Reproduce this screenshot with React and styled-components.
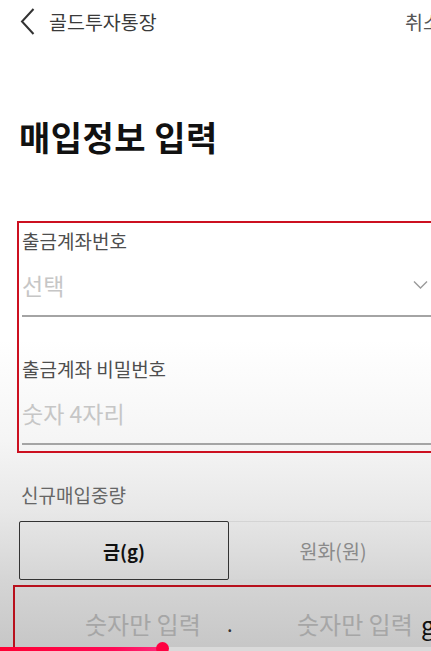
import React from 'react'
import styled, { createGlobalStyle } from 'styled-components'

const Global = createGlobalStyle`
  html, body {
    margin: 0;
    padding: 0;
    overflow: hidden;
  }
  body {
    width: 431px;
    height: 651px;
    font-family: "Noto Sans CJK KR", "Noto Sans", sans-serif;
    background: linear-gradient(180deg, #ffffff 0px, #ffffff 340px, #f5f5f5 440px, #e8e8e8 510px, #d5d5d5 580px, #c6c6c6 651px);
  }
`

export default function App() {
  return (
    <>
      <Global />
      <Page>
        <Header>
          <BackButton>
            <svg width="15" height="27" viewBox="0 0 15 27">
              <path d="M13.5 1 L2 13.5 L13.5 26" fill="none" stroke="#333" strokeWidth="2" />
            </svg>
            <span>골드투자통장</span>
          </BackButton>
          <Cancel>취소</Cancel>
        </Header>

        <Title>매입정보 입력</Title>

        <Highlight>
          <Field>
            <Label>출금계좌번호</Label>
            <ValueRow>
              <Placeholder>선택</Placeholder>
              <svg width="15" height="10" viewBox="0 0 15 10">
                <path d="M1 1.5 L7.5 8 L14 1.5" fill="none" stroke="#9a9a9a" strokeWidth="1.4" />
              </svg>
            </ValueRow>
          </Field>
          <Field $gapTop>
            <Label>출금계좌 비밀번호</Label>
            <ValueRow>
              <Placeholder>숫자 4자리</Placeholder>
            </ValueRow>
          </Field>
        </Highlight>

        <SectionLabel>신규매입중량</SectionLabel>
        <Toggle>
          <ToggleItem $active>금(g)</ToggleItem>
          <ToggleItem>원화(원)</ToggleItem>
        </Toggle>

        <AmountBox>
          <AmountInput>숫자만 입력</AmountInput>
          <Dot>.</Dot>
          <AmountInput>숫자만 입력</AmountInput>
          <Unit>g</Unit>
        </AmountBox>
      </Page>
      <Progress>
        <Played />
        <Knob />
      </Progress>
    </>
  )
}

//styling

const Page = styled.div`
  width: 456px;
  box-sizing: border-box;
  padding: 0 0 0 19px;
  color: #222;
`

const Header = styled.div`
  height: 42px;
  display: flex;
  align-items: center;
  justify-content: space-between;
  margin-left: 1px;
`

const BackButton = styled.div`
  display: flex;
  align-items: center;
  gap: 14px;
  font-size: 19.5px;
  color: #3a3a3a;
`

const Cancel = styled.div`
  font-size: 19.5px;
  color: #555;
  width: 51px;
`

const Title = styled.h1`
  margin: 73px 0 0 0;
  font-size: 34px;
  font-weight: 700;
  line-height: 44px;
  color: #111;
  letter-spacing: 0.5px;
`

const Highlight = styled.div`
  margin: 62px 0 0 -2px;
  border: 2px solid #cc1020;
  border-right: none;
  padding: 5px 0 6px 3px;
`

const Field = styled.div`
  display: flex;
  flex-direction: column;
  padding-top: ${p => (p.$gapTop ? '39px' : '0')};
  border-bottom: 2px solid #a4a4a4;
`

const Label = styled.div`
  font-size: 19px;
  line-height: 26px;
  color: #4e4e4e;
`

const ValueRow = styled.div`
  display: flex;
  align-items: center;
  justify-content: space-between;
  margin-top: 16px;
  padding: 0 28px 15px 0;
`

const Placeholder = styled.div`
  font-size: 23px;
  line-height: 30px;
  color: #c6c6c6;
`

const SectionLabel = styled.div`
  margin: 29px 0 0 2px;
  font-size: 19px;
  line-height: 26px;
  color: #666;
`

const Toggle = styled.div`
  display: grid;
  grid-template-columns: 210px 1fr;
  height: 59px;
  margin-top: 13px;
  margin-right: 19px;
  border-top: 1px solid #d4d4d4;
  border-bottom: 1px solid #d4d4d4;
  box-sizing: border-box;
`

const ToggleItem = styled.div`
  display: flex;
  align-items: center;
  justify-content: center;
  margin: ${p => (p.$active ? '-1px 0' : '0')};
  border: ${p => (p.$active ? '1.5px solid #333' : 'none')};
  border-radius: 2px;
  font-size: ${p => (p.$active ? '18.5px' : '19.5px')};
  font-weight: ${p => (p.$active ? 700 : 400)};
  color: ${p => (p.$active ? '#111' : '#8a8a8a')};
`

const AmountBox = styled.div`
  margin: 5px 0 0 -6px;
  height: 80px;
  border: 2px solid #b8101c;
  border-right: none;
  display: grid;
  grid-template-columns: 142px 70px 124px auto;
  align-items: start;
  padding: 21px 0 0 70px;
`

const AmountInput = styled.div`
  font-size: 24px;
  line-height: 32px;
  color: #a6a6a6;
  white-space: nowrap;
`

const Dot = styled.div`
  font-size: 20px;
  line-height: 32px;
  color: #333;
`

const Unit = styled.div`
  font-size: 25px;
  line-height: 32px;
  color: #111;
`

const Progress = styled.div`
  position: fixed;
  left: 0;
  right: 0;
  bottom: 0;
  height: 4px;
  background: rgba(255, 255, 255, 0.35);
`

const Played = styled.div`
  width: 163px;
  height: 100%;
  background: linear-gradient(90deg, #ff0033 0%, #ff0a55 70%, #ff2a7a 100%);
`

const Knob = styled.div`
  position: absolute;
  left: 156px;
  top: -5px;
  width: 13px;
  height: 13px;
  border-radius: 50%;
  background: #ff0040;
`
